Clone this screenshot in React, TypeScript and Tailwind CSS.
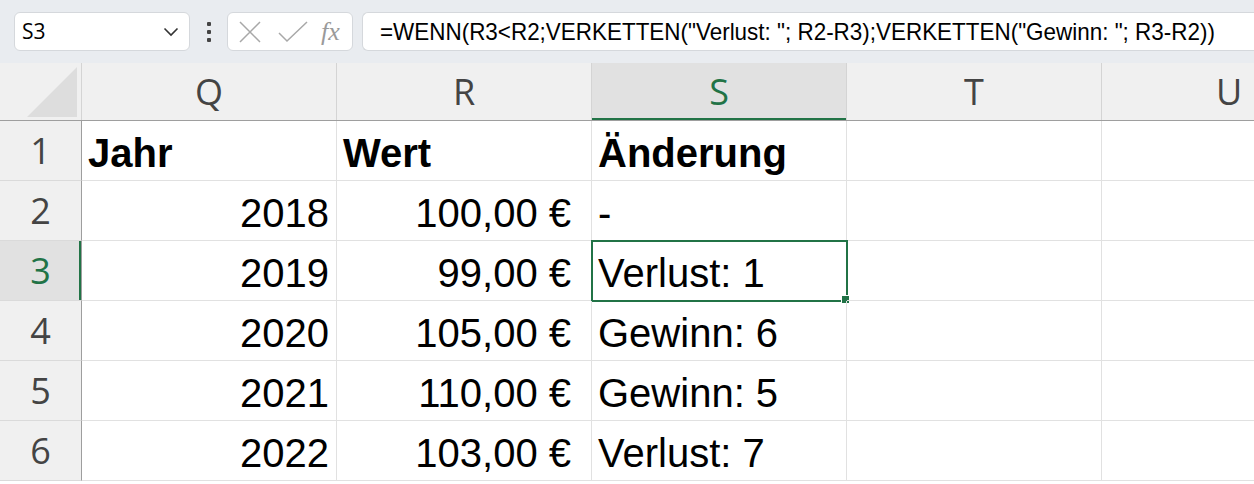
import React from "react";

const cols = ["Q", "R", "S", "T", "U"];
type Cell = { t: string; align?: "left" | "right"; bold?: boolean; pr?: string };
const rows: Cell[][] = [
  [{ t: "Jahr", bold: true }, { t: "Wert", bold: true }, { t: "Änderung", bold: true }, { t: "" }, { t: "" }],
  [{ t: "2018", align: "right" }, { t: "100,00 €", align: "right", pr: "pr" }, { t: "-" }, { t: "" }, { t: "" }],
  [{ t: "2019", align: "right" }, { t: "99,00 €", align: "right", pr: "pr" }, { t: "Verlust: 1" }, { t: "" }, { t: "" }],
  [{ t: "2020", align: "right" }, { t: "105,00 €", align: "right", pr: "pr" }, { t: "Gewinn: 6" }, { t: "" }, { t: "" }],
  [{ t: "2021", align: "right" }, { t: "110,00 €", align: "right", pr: "pr" }, { t: "Gewinn: 5" }, { t: "" }, { t: "" }],
  [{ t: "2022", align: "right" }, { t: "103,00 €", align: "right", pr: "pr" }, { t: "Verlust: 7" }, { t: "" }, { t: "" }],
];

const uiFont = { fontFamily: '"Open Sans", "Noto Sans", sans-serif' };
const cellFont = { fontFamily: '"Liberation Sans", Arial, sans-serif' };

export default function App() {
  return (
    <div className="w-[1254px] h-[484px] overflow-hidden bg-white">
      {/* Toolbar */}
      <div className="h-[63px] bg-[#e9ecf0] flex items-center pl-[14px] gap-0">
        <div className="w-[176px] shrink-0 h-[39px] bg-white rounded-[6px] border border-[#d5d8dc] flex items-center justify-between pl-[7px] pr-[10px]">
          <span className="text-[21px] text-black" style={uiFont}>S3</span>
          <svg width="16" height="10" viewBox="0 0 16 10">
            <path d="M1.5 1.5 L8 8 L14.5 1.5" fill="none" stroke="#333" strokeWidth="1.6" />
          </svg>
        </div>
        <div className="w-[37px] shrink-0 flex flex-col items-center justify-center gap-[4px]">
          <div className="w-[4px] h-[4px] bg-[#444] rounded-[1px]" />
          <div className="w-[4px] h-[4px] bg-[#444] rounded-[1px]" />
          <div className="w-[4px] h-[4px] bg-[#444] rounded-[1px]" />
        </div>
        <div className="w-[126px] shrink-0 h-[39px] bg-white rounded-[6px] border border-[#d5d8dc] flex items-center pl-[10px]">
          <svg width="24" height="24" viewBox="0 0 24 24">
            <path d="M2 2 L22 22 M22 2 L2 22" stroke="#a8a8a8" strokeWidth="1.5" />
          </svg>
          <svg width="32" height="24" viewBox="0 0 32 24" className="ml-[15px]">
            <path d="M2 13 L10 21 L30 2" fill="none" stroke="#a8a8a8" strokeWidth="1.5" />
          </svg>
          <span className="ml-[12px] text-[26px] italic text-[#9a9a9a] leading-none" style={{ fontFamily: '"Liberation Serif", "Times New Roman", serif' }}>
            fx
          </span>
        </div>
        <div className="ml-[9px] flex-1 h-[39px] bg-white rounded-l-[6px] border border-r-0 border-[#d5d8dc] flex items-center pl-[17px] overflow-hidden">
          <span
            className="inline-block origin-left scale-x-[0.935] text-[24px] text-black whitespace-nowrap"
            style={{ fontFamily: '"Liberation Sans", Arial, sans-serif' }}
          >
            =WENN(R3&lt;R2;VERKETTEN("Verlust: "; R2-R3);VERKETTEN("Gewinn: "; R3-R2))
          </span>
        </div>
      </div>

      {/* Column headers */}
      <div className="flex h-[58px] bg-[#f0f0f0] border-b border-[#9e9e9e]">
        <div className="w-[82px] shrink-0 h-full border-r border-[#d4d4d4] flex items-end justify-end pr-[4px] pb-[3px]">
          <svg width="50" height="50" viewBox="0 0 50 50">
            <polygon points="50,0 50,50 0,50" fill="#dddddd" />
          </svg>
        </div>
        {cols.map((c) => {
          const sel = c === "S";
          return (
            <div
              key={c}
              className={
                "w-[255px] shrink-0 h-full border-r flex items-center justify-center text-[36px] " +
                (sel ? "bg-[#e1e1e1] text-[#217346] border-[#d4d4d4] shadow-[inset_0_-2px_0_#217346]" : "text-[#444444] border-[#d4d4d4]")
              }
              style={uiFont}
            >
              {c}
            </div>
          );
        })}
      </div>

      {/* Rows */}
      {rows.map((r, i) => {
        const rowSel = i === 2;
        return (
          <div key={i} className="flex h-[60px]">
            <div
              className={
                "w-[82px] shrink-0 h-full border-b border-[#dadada] border-r flex items-center justify-center text-[36px] " +
                (rowSel ? "bg-[#e1e1e1] text-[#217346] border-r-[#9e9e9e] shadow-[inset_-2px_0_0_#217346]" : "bg-[#f0f0f0] text-[#444444] border-r-[#9e9e9e]")
              }
              style={uiFont}
            >
              {i + 1}
            </div>
            {r.map((c, j) => {
              const sel = rowSel && j === 2;
              return (
                <div
                  key={j}
                  className={
                    "w-[255px] shrink-0 h-full border-b border-r border-[#e1e1e1] flex items-center text-[40px] text-black relative " +
                    (c.align === "right" ? "justify-end " : "justify-start ") +
                    (c.pr ? "pr-[20px] " : c.align === "right" ? "pr-[7px] " : "pl-[6px] ") +
                    (c.bold ? "font-bold" : "")
                  }
                  style={cellFont}
                >
                  <span className="leading-none pt-[4px] whitespace-nowrap">{c.t}</span>
                  {sel && (
                    <>
                      <div className="absolute left-[-1px] top-[-1px] w-[257px] h-[62px] border-2 border-[#217346] pointer-events-none" />
                      <div className="absolute right-[-4px] bottom-[-4px] w-[7px] h-[7px] bg-[#217346] border border-white box-content" />
                    </>
                  )}
                </div>
              );
            })}
          </div>
        );
      })}
    </div>
  );
}
